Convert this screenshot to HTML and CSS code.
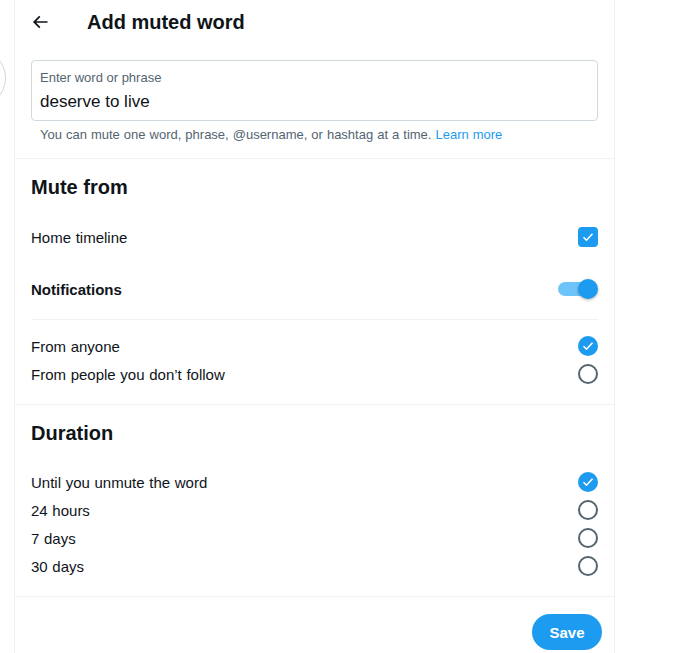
FILE: index.html
```html
<!DOCTYPE html>
<html>
<head>
<meta charset="utf-8">
<link rel="stylesheet" href="styles.css">
</head>
<body>
<div class="behind-circle"></div>
<div class="panel">
  <div class="header">
    <svg class="back" viewBox="0 0 24 24" width="20" height="20"><path d="M7.414 13l5.043 5.04-1.414 1.42L3.586 12l7.457-7.46 1.414 1.42L7.414 11H21v2H7.414z" fill="#0f1419"/></svg>
    <h1 class="title">Add muted word</h1>
  </div>

  <div class="section input-section">
    <div class="field">
      <div class="field-label">Enter word or phrase</div>
      <div class="field-value">deserve to live</div>
    </div>
    <div class="help">You can mute one word, phrase, @username, or hashtag at a time. <span class="link">Learn more</span></div>
  </div>

  <div class="section mute-section">
    <h2 class="heading">Mute from</h2>
    <div class="row tall">
      <span>Home timeline</span>
      <span class="checkbox"><svg viewBox="0 0 20 20" width="20" height="20"><path d="M5.5 10.2l3 3 6-6.4" fill="none" stroke="#fff" stroke-width="1.6"/></svg></span>
    </div>
    <div class="row tall">
      <span class="bold">Notifications</span>
      <span class="toggle"><span class="track"></span><span class="knob"></span></span>
    </div>
    <div class="inner-divider"></div>
    <div class="sub-list">
      <div class="row short">
        <span>From anyone</span>
        <span class="radio on"><svg viewBox="0 0 20 20" width="20" height="20"><path d="M5.5 10.2l3 3 6-6.4" fill="none" stroke="#fff" stroke-width="1.6"/></svg></span>
      </div>
      <div class="row short">
        <span>From people you don’t follow</span>
        <span class="radio"></span>
      </div>
    </div>
  </div>

  <div class="section duration-section">
    <h2 class="heading">Duration</h2>
    <div class="sub-list">
      <div class="row short">
        <span>Until you unmute the word</span>
        <span class="radio on"><svg viewBox="0 0 20 20" width="20" height="20"><path d="M5.5 10.2l3 3 6-6.4" fill="none" stroke="#fff" stroke-width="1.6"/></svg></span>
      </div>
      <div class="row short">
        <span>24 hours</span>
        <span class="radio"></span>
      </div>
      <div class="row short">
        <span>7 days</span>
        <span class="radio"></span>
      </div>
      <div class="row short">
        <span>30 days</span>
        <span class="radio"></span>
      </div>
    </div>
  </div>

  <div class="footer">
    <button class="save">Save</button>
  </div>
</div>
</body>
</html>
```

FILE: styles.css
```css
* { box-sizing: border-box; }
html, body {
  margin: 0;
  padding: 0;
  background: #fff;
  overflow: hidden;
}
body {
  font-family: "Liberation Sans", Arial, sans-serif;
  color: #0f1419;
  position: relative;
  width: 676px;
  height: 653px;
}
.behind-circle {
  position: absolute;
  left: -54px;
  top: 48px;
  width: 60px;
  height: 60px;
  border-radius: 50%;
  border: 1px solid #cfd9de;
}
.panel {
  margin-left: 14px;
  width: 601px;
  height: 653px;
  border-left: 1px solid #eff3f4;
  border-right: 1px solid #eff3f4;
}
.header {
  height: 42px;
  display: flex;
  align-items: center;
  padding: 1px 0 0 15px;
}
.back {
  display: block;
  margin-right: 37px;
}
.title {
  margin: 0;
  font-size: 20px;
  font-weight: 700;
  line-height: 24px;
}
.section {
  border-bottom: 1px solid #eff3f4;
}
.input-section {
  padding: 18px 16px 15px;
}
.field {
  border: 1px solid #cfd9de;
  border-radius: 4px;
  padding: 9px 8px 6px;
  height: 61px;
}
.field-label {
  font-size: 13px;
  line-height: 16px;
  color: #536471;
}
.field-value {
  font-size: 17px;
  line-height: 24px;
  margin-top: 4px;
}
.help {
  margin-top: 6px;
  padding-left: 9px;
  font-size: 13px;
  line-height: 16px;
  color: #536471;
  word-spacing: 0.4px;
}
.link { color: #1d9bf0; }
.heading {
  margin: 0;
  padding: 0 16px;
  font-size: 20px;
  font-weight: 700;
  line-height: 24px;
}
.mute-section {
  padding: 16px 0 16px;
}
.mute-section .heading {
  margin-bottom: 12px;
}
.row {
  display: flex;
  align-items: center;
  justify-content: space-between;
  padding: 0 16px;
  font-size: 15px;
  word-spacing: 0.5px;
}
.row.tall { height: 52px; }
.row.short { height: 28px; }
.bold { font-weight: 700; }
.inner-divider {
  margin: 4px 16px 0;
  height: 1px;
  background: #eff3f4;
}
.mute-section .sub-list {
  padding-top: 12px;
}
.duration-section {
  padding: 16px 0 16px;
}
.duration-section .sub-list {
  padding-top: 23px;
}
.checkbox {
  width: 20px;
  height: 20px;
  border-radius: 4px;
  background: #1d9bf0;
  display: block;
}
.checkbox svg, .radio svg { display: block; }
.radio {
  width: 20px;
  height: 20px;
  border-radius: 50%;
  border: 2px solid #536471;
  display: block;
}
.radio.on {
  border: none;
  background: #1d9bf0;
}
.toggle {
  width: 40px;
  height: 20px;
  display: flex;
  align-items: center;
  position: relative;
}
.track {
  width: 36px;
  height: 14px;
  border-radius: 7px;
  background: #6ec4f8;
}
.knob {
  position: absolute;
  right: 0;
  top: 0;
  width: 20px;
  height: 20px;
  border-radius: 50%;
  background: #1d9bf0;
  box-shadow: 0 1px 3px rgba(0,0,0,0.3);
}
.footer {
  display: flex;
  justify-content: flex-end;
  padding: 17px 12px 0;
}
.save {
  width: 70px;
  height: 36px;
  border: none;
  border-radius: 18px;
  background: #1d9bf0;
  color: #fff;
  font-family: inherit;
  font-size: 15px;
  font-weight: 700;
  padding: 0;
}
```
